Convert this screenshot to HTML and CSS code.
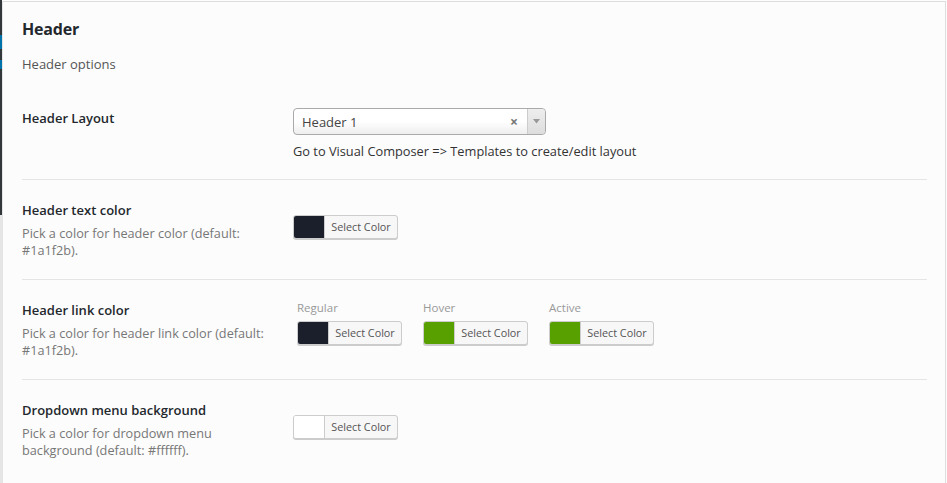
FILE: index.html
```html
<!DOCTYPE html>
<html>
<head>
<meta charset="utf-8">
<link rel="stylesheet" href="styles.css">
</head>
<body>
<div class="page">
  <div class="admin-edge"></div>
  <div class="panel">
    <h2 class="title">Header</h2>
    <p class="intro">Header options</p>

    <div class="row row-first">
      <div class="label"><div class="name">Header Layout</div></div>
      <div class="field field-select">
        <div class="select">
          <span class="select-text">Header 1</span>
          <span class="select-clear">×</span>
          <span class="select-arrow"><svg width="7" height="5" viewBox="0 0 7 5"><path d="M0 0 L7 0 L3.5 4.5 Z" fill="#999"/></svg></span>
        </div>
        <div class="help">Go to Visual Composer =&gt; Templates to create/edit layout</div>
      </div>
    </div>

    <div class="row">
      <div class="label">
        <div class="name">Header text color</div>
        <div class="desc">Pick a color for header color (default: #1a1f2b).</div>
      </div>
      <div class="field">
        <div class="colorbtn"><span class="swatch dark"></span><span class="btntext">Select Color</span></div>
      </div>
    </div>

    <div class="row">
      <div class="label">
        <div class="name">Header link color</div>
        <div class="desc">Pick a color for header link color (default: #1a1f2b).</div>
      </div>
      <div class="field links">
        <div class="linkcol">
          <div class="sublabel">Regular</div>
          <div class="colorbtn"><span class="swatch dark"></span><span class="btntext">Select Color</span></div>
        </div>
        <div class="linkcol">
          <div class="sublabel">Hover</div>
          <div class="colorbtn"><span class="swatch green"></span><span class="btntext">Select Color</span></div>
        </div>
        <div class="linkcol">
          <div class="sublabel">Active</div>
          <div class="colorbtn"><span class="swatch green"></span><span class="btntext">Select Color</span></div>
        </div>
      </div>
    </div>

    <div class="row row-last">
      <div class="label">
        <div class="name">Dropdown menu background</div>
        <div class="desc">Pick a color for dropdown menu background (default: #ffffff).</div>
      </div>
      <div class="field">
        <div class="colorbtn"><span class="swatch white"></span><span class="btntext">Select Color</span></div>
      </div>
    </div>
  </div>
</div>
</body>
</html>
```

FILE: styles.css
```css
html, body {
  margin: 0;
  padding: 0;
  background: #fdfdfd;
}
body {
  font-family: "Open Sans", "Noto Sans", sans-serif;
  color: #23282d;
  width: 947px;
  height: 483px;
  overflow: hidden;
}
.page {
  display: flex;
  height: 483px;
}
.admin-edge {
  width: 2px;
  flex: none;
  background: linear-gradient(to bottom,
    #32373c 0, #32373c 35px,
    #0073aa 35px, #0073aa 49px,
    #32373c 49px, #32373c 60px,
    #0073aa 60px, #0073aa 69px,
    #32373c 69px, #32373c 215px,
    #e5e5e5 215px, #e5e5e5 100%);
}
.panel {
  flex: none;
  width: 944px;
  margin-top: 1px;
  border-top: 1px solid #ddd;
  border-left: 1px solid #e5e5e5;
  border-right: 1px solid #ddd;
  background: #fcfcfc;
  padding: 0 19px;
  box-sizing: border-box;
}
.title {
  margin: 0;
  padding-top: 16px;
  font-size: 16px;
  font-weight: 700;
  letter-spacing: -0.2px;
  line-height: 22px;
  color: #23282d;
}
.intro {
  margin: 0;
  padding-top: 16px;
  font-size: 13px;
  line-height: 17px;
  color: #555;
}
.row {
  display: flex;
  padding: 20px 0 20px;
  border-bottom: 1px solid #e5e5e5;
  width: 905px;
  height: 100px;
  box-sizing: border-box;
}
.row-first {
  padding-top: 35px;
  padding-bottom: 0;
  height: 107px;
}
.row-last {
  border-bottom: none;
}
.label {
  width: 271px;
  flex: none;
}
.name {
  font-size: 13px;
  font-weight: 600;
  line-height: 20px;
  color: #23282d;
}
.desc {
  margin-top: 5px;
  width: 252px;
  font-size: 12.7px;
  line-height: 17px;
  color: #777;
}
.field {
  flex: 1;
  padding-top: 15px;
}
.field-select {
  padding-top: 0;
}
.select {
  width: 251px;
  height: 25px;
  border: 1px solid #aaa;
  border-radius: 4px;
  background: linear-gradient(to bottom, #fff 0, #fff 50%, #eee 100%);
  display: flex;
  align-items: center;
  box-sizing: content-box;
}
.select-text {
  flex: 1;
  padding-left: 8px;
  font-size: 13px;
  color: #444;
}
.select-clear {
  width: 14px;
  color: #777;
  font-weight: 700;
  font-size: 14px;
  margin-right: 6px;
  text-align: center;
}
.select-arrow {
  width: 17px;
  height: 25px;
  border-left: 1px solid #ccc;
  background: linear-gradient(to bottom, #eee, #ddd);
  border-radius: 0 4px 4px 0;
  display: flex;
  align-items: center;
  justify-content: center;
}
.help {
  margin-top: 8px;
  font-size: 12.8px;
  line-height: 17px;
  color: #333;
}
.colorbtn {
  display: inline-flex;
  height: 22px;
  border: 1px solid #ccc;
  border-radius: 3px;
  background: #f7f7f7;
  box-shadow: 0 1px 0 #ccc;
  overflow: hidden;
}
.swatch {
  width: 30px;
  height: 22px;
  border-right: 1px solid #ccc;
}
.swatch.dark { background: #1a1f2b; }
.swatch.green { background: #57a000; }
.swatch.white { background: #fff; }
.btntext {
  width: 72px;
  text-align: center;
  font-size: 10.8px;
  line-height: 22px;
  color: #555;
}
.links {
  display: flex;
  gap: 21px;
  padding-top: 0;
  padding-left: 4px;
}
.sublabel {
  font-size: 11.5px;
  line-height: 16px;
  color: #999;
  margin-bottom: 5px;
}
```
